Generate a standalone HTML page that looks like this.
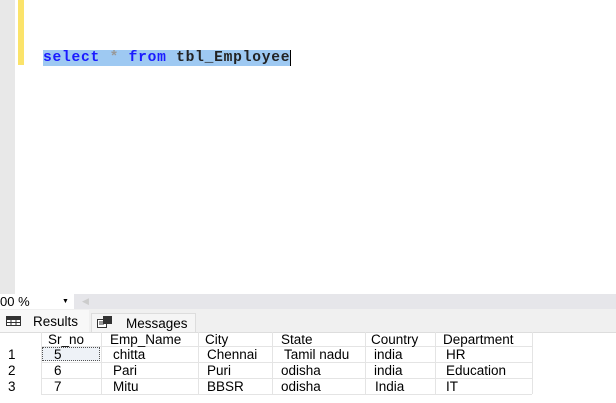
<!DOCTYPE html><html><head><style>
body{margin:0;width:616px;height:403px;overflow:hidden;background:#fff;font-family:"Liberation Sans",sans-serif;position:relative}
.a{position:absolute}
.c{position:absolute;font-size:13.5px;line-height:15px;color:#000;white-space:nowrap}
.v{position:absolute;width:1px;background:#e4e4e4;top:332px;height:62px}
.h{position:absolute;height:1px;background:#e4e4e4;left:41px;width:491px}
</style></head><body>
<div class="a" style="left:0;top:0;width:15px;height:294px;background:#e8e8e8"></div>
<div class="a" style="left:18px;top:0;width:6px;height:65px;background:#fbe36a"></div>
<div class="a" style="left:43px;top:50px;width:248px;height:16px;background:#9ec9f2"></div>
<div class="a" style="left:43px;top:50px;font-family:'Liberation Mono',monospace;font-size:14.6px;letter-spacing:0.75px;line-height:16px;font-weight:bold;white-space:pre"><span style="color:#1a1aff">select</span> <span style="color:#999">*</span> <span style="color:#1a1aff">from</span> <span style="color:#222">tbl_Employee</span></div>
<div class="a" style="left:290px;top:50px;width:1px;height:16px;background:#000"></div>
<div class="a" style="left:0;top:294px;width:616px;height:15px;background:#e6e6ea"></div>
<div class="a" style="left:0;top:294px;width:74px;height:15px;background:#fff;font-size:13px;line-height:15px">00 %<span style="position:absolute;left:62px;top:0;font-size:7px">▼</span></div>
<div class="a" style="left:82px;top:296px;color:#ccc;font-size:9px">◀</div>
<div class="a" style="left:0;top:309px;width:616px;height:23px;background:#f0f0f0;border-bottom:1px solid #ddd"></div>
<div class="a" style="left:0;top:310px;width:89px;height:22px;background:#f8f8f8"></div>
<svg class="a" style="left:6px;top:316px" width="15" height="10"><rect x=".5" y=".5" width="14" height="9" fill="#fff" stroke="#333"/><path d="M0 3.5h15M0 6.5h15M5 0v10M10 0v10" stroke="#333"/><rect x="0" y="0" width="15" height="3" fill="#333"/></svg>
<div class="c" style="left:33px;top:314px">Results</div>
<div class="a" style="left:91px;top:313px;width:105px;height:19px;background:#f5f5f5;border:1px solid #ddd;border-bottom:none;box-sizing:border-box"></div>
<svg class="a" style="left:97px;top:316px" width="16" height="12"><rect x=".5" y="3.5" width="9" height="8" fill="#fff" stroke="#333"/><rect x="6" y="0" width="9" height="8" fill="#333"/><path d="M2 6h5M2 8h5" stroke="#333"/></svg>
<div class="c" style="left:126px;top:316px">Messages</div>
<div class="h" style="top:346px"></div><div class="h" style="top:362px"></div><div class="h" style="top:378px"></div><div class="h" style="top:394px"></div>
<div class="v" style="left:41px"></div><div class="v" style="left:101px"></div><div class="v" style="left:198px"></div><div class="v" style="left:272px"></div><div class="v" style="left:365px"></div><div class="v" style="left:435px"></div><div class="v" style="left:532px"></div>
<div class="a" style="left:42px;top:347px;width:58px;height:14px;border:1px dotted #555;box-sizing:border-box;background:#eef2f7"></div>
<div class="c" style="left:48px;top:332px">Sr_no</div><div class="c" style="left:110px;top:332px">Emp_Name</div><div class="c" style="left:205px;top:332px">City</div><div class="c" style="left:281px;top:332px">State</div><div class="c" style="left:371px;top:332px">Country</div><div class="c" style="left:443px;top:332px">Department</div>
<div class="c" style="left:8px;top:347px">1</div><div class="c" style="left:54px;top:347px">5</div><div class="c" style="left:113px;top:347px">chitta</div><div class="c" style="left:207px;top:347px">Chennai</div><div class="c" style="left:284px;top:347px">Tamil nadu</div><div class="c" style="left:374px;top:347px">india</div><div class="c" style="left:446px;top:347px">HR</div>
<div class="c" style="left:8px;top:363px">2</div><div class="c" style="left:54px;top:363px">6</div><div class="c" style="left:113px;top:363px">Pari</div><div class="c" style="left:207px;top:363px">Puri</div><div class="c" style="left:281px;top:363px">odisha</div><div class="c" style="left:374px;top:363px">india</div><div class="c" style="left:446px;top:363px">Education</div>
<div class="c" style="left:8px;top:379px">3</div><div class="c" style="left:54px;top:379px">7</div><div class="c" style="left:113px;top:379px">Mitu</div><div class="c" style="left:207px;top:379px">BBSR</div><div class="c" style="left:281px;top:379px">odisha</div><div class="c" style="left:375px;top:379px">India</div><div class="c" style="left:446px;top:379px">IT</div>
</body></html>
